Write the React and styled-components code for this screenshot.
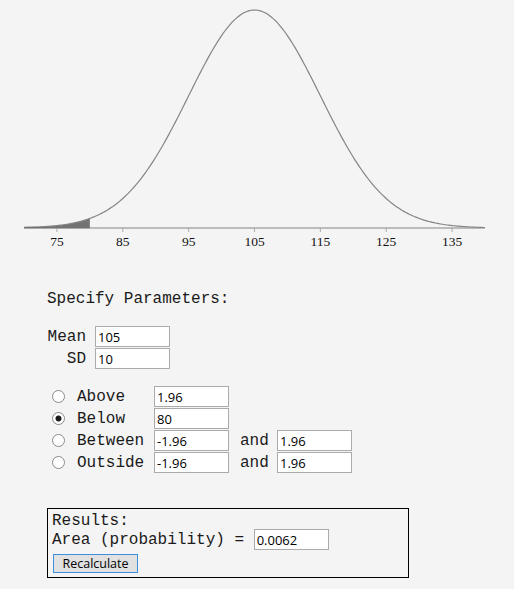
import React, { useState } from "react";
import styled, { createGlobalStyle } from "styled-components";

const GlobalStyle = createGlobalStyle`
  html, body {
    margin: 0;
    padding: 0;
    background: #f4f4f4;
  }
  * { box-sizing: border-box; }
`;

const MONO = `"Liberation Mono", "Courier New", monospace`;
const SANS = `"Open Sans", "Noto Sans", sans-serif`;

// chart geometry
const X0 = 24;
const X1 = 485;
const VMIN = 70;
const VMAX = 140;
const BASE = 228;
const PEAK = 218;

const Page = styled.div`
  width: 514px;
  min-height: 589px;
  background: #f4f4f4;
`;

const ChartSvg = styled.svg`
  display: block;
`;

const Form = styled.div`
  padding-left: 47px;
  font-family: ${MONO};
  font-size: 16px;
  color: #1a1a1a;
`;

const Title = styled.div`
  margin-top: 30px;
  line-height: 18px;
  height: 18px;
`;

const ParamGrid = styled.div`
  margin-top: 18px;
  display: grid;
  grid-template-columns: 39px 75px;
  column-gap: 9px;
  row-gap: 1px;
  align-items: center;
`;

// mono labels sit one or two px lower than the input box centre
const CellText = styled.span`
  height: 21px;
  line-height: 19px;
  padding-top: 2px;
  white-space: pre;
`;

const ParamLabel = styled(CellText)`
  text-align: right;
`;

const Field = styled.input`
  width: 75px;
  height: 21px;
  border: 1px solid #ababab;
  background: #fff;
  padding: 0 0 0 2px;
  margin: 0;
  font-family: ${SANS};
  font-size: 13px;
  color: #000;
  outline: none;
`;

const BoundGrid = styled.div`
  margin-top: 17px;
  margin-left: 5px;
  display: grid;
  grid-template-columns: 25px 77px 75px 48px 75px;
  row-gap: 1px;
  align-items: center;
`;

const Radio = styled.input.attrs({ type: "radio" })`
  appearance: none;
  -webkit-appearance: none;
  width: 13px;
  height: 13px;
  margin: 0;
  border: 1px solid #8a8a8a;
  border-radius: 50%;
  background: ${(p) =>
    p.checked
      ? "radial-gradient(circle, #1a1a1a 0 2.6px, #fff 3.4px)"
      : "#fff"};
  align-self: center;
`;

const AndText = styled(CellText)`
  padding-left: 11px;
`;

const ResultsBox = styled.div`
  margin-top: 35px;
  width: 362px;
  border: 1px solid #000;
  padding: 2px 4px 4px 4px;
`;

const ResultLine = styled.div`
  line-height: 18px;
  height: 18px;
  padding-top: 1px;
`;

const AreaRow = styled.div`
  display: flex;
  align-items: center;
  height: 21px;
`;

const Button = styled.button`
  margin-top: 4px;
  margin-left: 1px;
  width: 85px;
  height: 19px;
  padding: 0;
  border: 1px solid #3d8fe0;
  background: #e1e1e1;
  font-family: ${SANS};
  font-size: 12.5px;
  color: #000;
  display: block;
`;

const xOf = (v) => X0 + ((v - VMIN) * (X1 - X0)) / (VMAX - VMIN);
const yOf = (v, mean, sd) =>
  BASE - PEAK * Math.exp(-Math.pow((v - mean) / sd, 2) / 2);

function Chart({ mean, sd, below }) {
  const pts = [];
  for (let v = VMIN; v <= VMAX + 0.001; v += 0.25) {
    pts.push(`${xOf(v).toFixed(2)},${yOf(v, mean, sd).toFixed(2)}`);
  }
  const shade = [`${xOf(VMIN)},${BASE}`];
  for (let v = VMIN; v <= below + 0.001; v += 0.25) {
    shade.push(`${xOf(v).toFixed(2)},${yOf(v, mean, sd).toFixed(2)}`);
  }
  shade.push(`${xOf(below)},${BASE}`);
  const ticks = [75, 85, 95, 105, 115, 125, 135];

  return (
    <ChartSvg width="514" height="260" viewBox="0 0 514 260">
      <polygon points={shade.join(" ")} fill="#737373" />
      <line x1={X0} y1={BASE} x2={X1} y2={BASE} stroke="#aaa" strokeWidth="1.6" />
      {ticks.map((t) => (
        <g key={t}>
          <line x1={xOf(t)} y1={BASE} x2={xOf(t)} y2={BASE + 4} stroke="#aaa" strokeWidth="1" />
          <text
            x={xOf(t)}
            y={BASE + 18}
            textAnchor="middle"
            fontFamily="'Liberation Serif', 'Times New Roman', serif"
            fontSize="13.5"
            fill="#111"
          >
            {t}
          </text>
        </g>
      ))}
      <polyline points={pts.join(" ")} fill="none" stroke="#858585" strokeWidth="1.2" />
      <line x1={X0} y1={BASE - 0.5} x2={xOf(below)} y2={BASE - 0.5} stroke="#737373" strokeWidth="1.5" />
    </ChartSvg>
  );
}

export default function App() {
  const [mode, setMode] = useState("below");
  const rows = [
    { key: "above", label: "Above", a: "1.96" },
    { key: "below", label: "Below", a: "80" },
    { key: "between", label: "Between", a: "-1.96", b: "1.96" },
    { key: "outside", label: "Outside", a: "-1.96", b: "1.96" },
  ];

  return (
    <Page>
      <GlobalStyle />
      <Chart mean={105} sd={10} below={80} />
      <Form>
        <Title>Specify Parameters:</Title>
        <ParamGrid>
          <ParamLabel>Mean</ParamLabel>
          <Field defaultValue="105" />
          <ParamLabel>SD</ParamLabel>
          <Field defaultValue="10" />
        </ParamGrid>
        <BoundGrid>
          {rows.map((r) => (
            <React.Fragment key={r.key}>
              <Radio
                name="bound"
                checked={mode === r.key}
                onChange={() => setMode(r.key)}
              />
              <CellText>{r.label}</CellText>
              <Field defaultValue={r.a} />
              {r.b ? <AndText>and</AndText> : <span />}
              {r.b ? <Field defaultValue={r.b} /> : <span />}
            </React.Fragment>
          ))}
        </BoundGrid>
        <ResultsBox>
          <ResultLine>Results:</ResultLine>
          <AreaRow>
            <CellText>{"Area (probability) = "}</CellText>
            <Field defaultValue="0.0062" />
          </AreaRow>
          <Button>Recalculate</Button>
        </ResultsBox>
      </Form>
    </Page>
  );
}
